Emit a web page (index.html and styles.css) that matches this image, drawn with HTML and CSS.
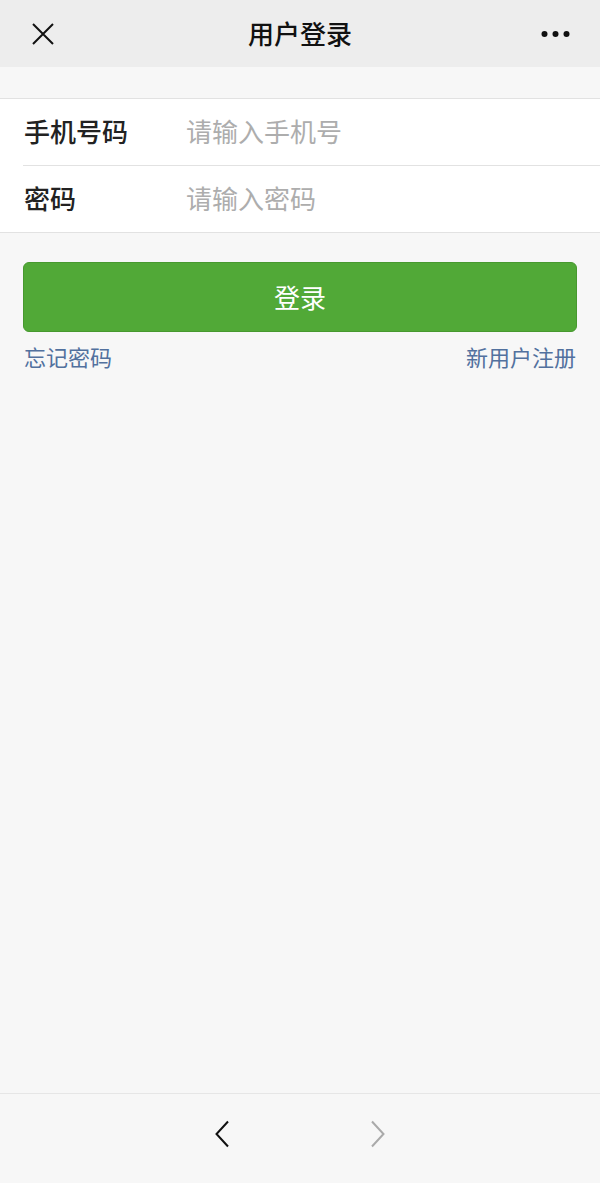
FILE: index.html
```html
<!DOCTYPE html>
<html lang="zh-CN">
<head>
    <meta charset="UTF-8">
    <meta name="viewport" content="width=device-width, initial-scale=1.0">
    <title>用户登录</title>
    <link rel="stylesheet" href="styles.css">
</head>
<body>
    <div class="page">
        <header class="topbar">
            <button class="icon-btn close" aria-label="关闭">
                <svg width="24" height="24" viewBox="0 0 24 24">
                    <path d="M2 2 L22 22 M22 2 L2 22" stroke="#111" stroke-width="2" fill="none"/>
                </svg>
            </button>
            <h1 class="title">用户登录</h1>
            <button class="icon-btn more" aria-label="更多">
                <svg width="30" height="8" viewBox="0 0 30 8">
                    <circle cx="3.5" cy="4" r="3" fill="#111"/>
                    <circle cx="14.5" cy="4" r="3" fill="#111"/>
                    <circle cx="25.5" cy="4" r="3" fill="#111"/>
                </svg>
            </button>
        </header>

        <main class="content">
            <form class="form" onsubmit="return false">
                <div class="field">
                    <label for="phone">手机号码</label>
                    <input type="tel" id="phone" placeholder="请输入手机号">
                </div>
                <div class="field">
                    <label for="password">密码</label>
                    <input type="password" id="password" placeholder="请输入密码">
                </div>
            </form>

            <button class="login-btn">登录</button>

            <div class="links">
                <a href="#">忘记密码</a>
                <a href="#">新用户注册</a>
            </div>
        </main>

        <footer class="toolbar">
            <button class="icon-btn nav" aria-label="后退">
                <svg width="16" height="28" viewBox="0 0 16 28">
                    <path d="M14 1.5 L2.5 14 L14 26.5" stroke="#111" stroke-width="2" fill="none"/>
                </svg>
            </button>
            <button class="icon-btn nav" aria-label="前进">
                <svg width="16" height="28" viewBox="0 0 16 28">
                    <path d="M2 1.5 L13.5 14 L2 26.5" stroke="#aaa" stroke-width="2" fill="none"/>
                </svg>
            </button>
        </footer>
    </div>
</body>
</html>
```

FILE: styles.css
```css
body {
    margin: 0;
    font-family: "Noto Sans CJK SC", "Noto Sans", sans-serif;
    background-color: #f7f7f7;
    color: #222;
}
.page {
    display: flex;
    flex-direction: column;
    min-height: 100vh;
}
.icon-btn {
    background: none;
    border: none;
    padding: 0;
    cursor: pointer;
    display: flex;
    align-items: center;
    justify-content: center;
}
.topbar {
    height: 67px;
    background-color: #ededed;
    display: grid;
    grid-template-columns: 100px 1fr 100px;
    align-items: center;
}
.close {
    margin-left: 31px;
    width: 24px;
    height: 24px;
}
.more {
    justify-self: end;
    margin-right: 29px;
}
.title {
    margin: 0 0 3px;
    text-align: center;
    font-size: 26px;
    font-weight: 500;
    color: #111;
}
.content {
    flex: 1;
}
.form {
    margin-top: 31px;
    background-color: #fff;
    border-top: 1px solid #e2e2e2;
    border-bottom: 1px solid #e2e2e2;
}
.field {
    display: flex;
    align-items: center;
    box-sizing: border-box;
    height: 66px;
    padding-bottom: 3px;
    margin-left: 23px;
}
.field + .field {
    border-top: 1px solid #e2e2e2;
    height: 67px;
}
.field label {
    width: 162px;
    padding-left: 1px;
    font-size: 26px;
    font-weight: 500;
    color: #222;
}
.field input {
    flex: 1;
    border: none;
    outline: none;
    padding: 0;
    font-family: inherit;
    font-size: 26px;
    color: #222;
    background: transparent;
}
.field input::placeholder {
    color: #adadad;
}
.login-btn {
    display: block;
    box-sizing: border-box;
    width: calc(100% - 46px);
    height: 70px;
    margin: 29px 23px 0;
    padding-bottom: 3px;
    background-color: #51a937;
    border: 1px solid #47992f;
    border-radius: 6px;
    color: #fff;
    font-family: inherit;
    font-size: 26px;
    cursor: pointer;
}
.links {
    display: flex;
    justify-content: space-between;
    margin: 9px 24px 0;
    line-height: 30px;
}
.links a {
    color: #52719e;
    font-size: 22px;
    text-decoration: none;
}
.toolbar {
    height: 79px;
    padding-bottom: 10px;
    border-top: 1px solid #e6e6e6;
    display: flex;
    justify-content: center;
    align-items: center;
    gap: 140px;
}
.nav {
    width: 16px;
    height: 28px;
}
```
